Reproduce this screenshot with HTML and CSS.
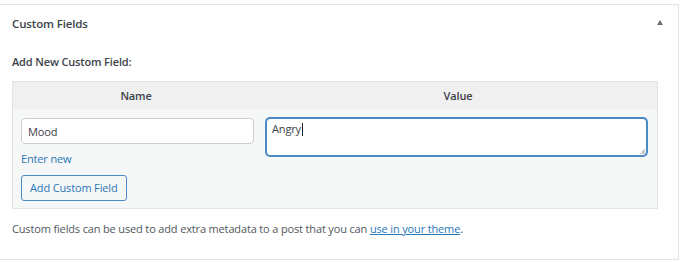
FILE: index.html
```html
<!DOCTYPE html>
<html lang="en">
<head>
    <meta charset="UTF-8">
    <title>Custom Fields</title>
    <link rel="stylesheet" href="styles.css">
</head>
<body>
    <div class="postbox">
        <div class="postbox-header">
            <h2 class="hndle">Custom Fields</h2>
            <span class="toggle-arrow"></span>
        </div>
        <div class="inside">
            <p class="add-label">Add New Custom Field:</p>
            <div class="newmeta">
                <div class="newmeta-head">
                    <div class="col-name">Name</div>
                    <div class="col-value">Value</div>
                </div>
                <div class="newmeta-body">
                    <div class="col-name">
                        <input type="text" class="meta-key" value="Mood">
                        <a href="#" class="enter-new">Enter new</a>
                        <button class="button">Add Custom Field</button>
                    </div>
                    <div class="col-value">
                        <div class="meta-value">Angry<span class="caret"></span></div>
                    </div>
                </div>
            </div>
            <p class="help">Custom fields can be used to add extra metadata to a post that you can <a href="#">use in your theme</a>.</p>
        </div>
    </div>
</body>
</html>
```

FILE: styles.css
```css
body {
    margin: 0;
    background: #fff;
    font-family: 'Open Sans', 'Noto Sans', Arial, sans-serif;
    font-size: 11px;
    letter-spacing: -0.15px;
    line-height: 18px;
    color: #50575e;
}
a {
    color: #2a78b8;
}
.postbox {
    margin: 4px 1px 0 -1px;
    border: 1px solid #e4e4e7;
}
.postbox-header {
    height: 38px;
    padding: 0 12px;
    display: flex;
    align-items: center;
    justify-content: space-between;
}
.hndle {
    margin: 0;
    font-size: 11.5px;
    font-weight: 600;
    color: #3c434a;
}
.toggle-arrow {
    width: 0;
    height: 0;
    margin-right: 3px;
    margin-top: -3px;
    border-left: 3px solid transparent;
    border-right: 3px solid transparent;
    border-bottom: 5px solid #6c7075;
}
.inside {
    padding: 0 12px 12px;
}
.add-label {
    margin: 10px 0;
    font-weight: 600;
    color: #3c434a;
}
.newmeta {
    width: 644px;
    border: 1px solid #e2e4e7;
    background: #f6f7f7;
}
.newmeta-head {
    display: grid;
    grid-template-columns: 246px 1fr;
    height: 28px;
    background: #f0f0f1;
    font-weight: 600;
    color: #3c434a;
    line-height: 28px;
    text-align: center;
}
.newmeta-body {
    display: grid;
    grid-template-columns: 246px 1fr;
    height: 98px;
}
.newmeta-body .col-name {
    padding: 8px 5px 0 8px;
}
.newmeta-body .col-value {
    padding: 8px 10px 0 7px;
}
.meta-key {
    display: block;
    box-sizing: border-box;
    width: 233px;
    height: 26px;
    margin: 0;
    padding: 0 6px;
    border: 1px solid #ccced2;
    border-radius: 4px;
    font: inherit;
    letter-spacing: inherit;
    color: #3c434a;
    background: #fff;
}
.enter-new {
    display: block;
    margin-top: 6px;
    text-decoration: none;
}
.button {
    display: block;
    height: 26px;
    margin-top: 7px;
    padding: 0 8px;
    border: 1px solid #4a8ac6;
    border-radius: 3px;
    background: #f6f7f7;
    color: #2a78b8;
    font: inherit;
    letter-spacing: inherit;
    cursor: pointer;
}
.meta-value {
    position: relative;
    box-sizing: border-box;
    height: 38px;
    padding: 1px 5px;
    border: 1px solid #4a8ac6;
    border-radius: 4px;
    box-shadow: 0 0 0 1px #4a8ac6;
    background: #fff;
    color: #3c434a;
}
.meta-value::after {
    content: "";
    position: absolute;
    right: 1px;
    bottom: 1px;
    width: 5px;
    height: 5px;
    background: linear-gradient(135deg, transparent 50%, #c3c4c7 50%);
}
.caret {
    display: inline-block;
    width: 1px;
    height: 13px;
    margin-left: 1px;
    vertical-align: -3px;
    background: #1d2327;
}
.help {
    margin: 11px 0 9px;
}
```
